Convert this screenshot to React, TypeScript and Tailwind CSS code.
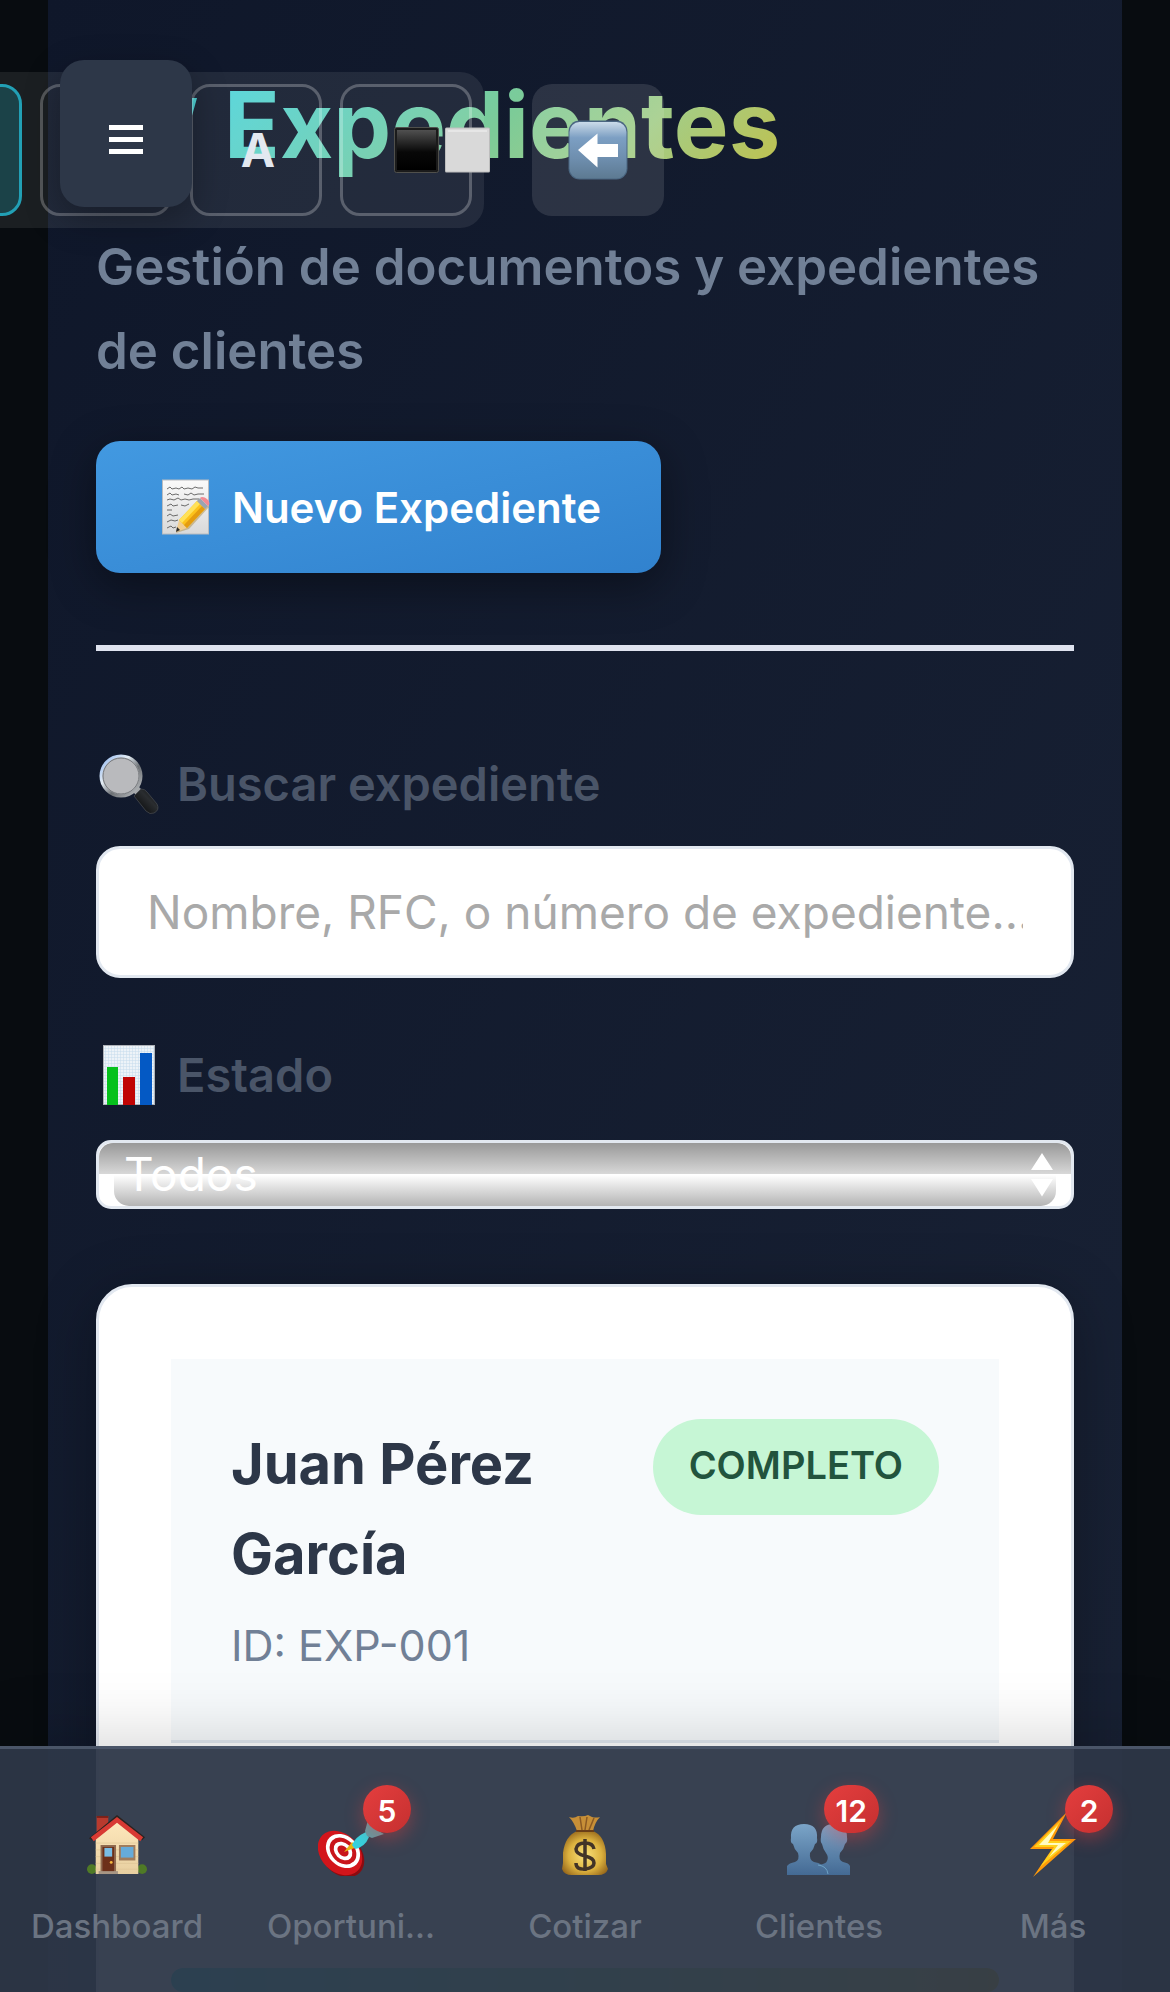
import React from "react";

function FolderIcon() {
  return (
    <svg viewBox="0 0 104 96" className="h-24 w-[104px] shrink-0" aria-hidden="true">
      <path d="M8 22h30l8 10h45l3-11h7L90 60v24H8z" fill="#3fcfd2" />
    </svg>
  );
}

function BackIcon() {
  return (
    <svg viewBox="0 0 60 60" className="size-[60px] shrink-0" aria-hidden="true">
      <defs>
        <linearGradient id="backFace" x1="0" y1="0" x2="0" y2="1">
          <stop offset="0" stopColor="#cbdcea" />
          <stop offset="0.12" stopColor="#a9c1d8" />
          <stop offset="0.28" stopColor="#7c9fc3" />
          <stop offset="0.65" stopColor="#6e8eae" />
          <stop offset="1" stopColor="#5d7a92" />
        </linearGradient>
      </defs>
      <rect x="0.5" y="0.5" width="59" height="59" rx="11" fill="#4a6681" />
      <rect x="1.5" y="2" width="57" height="56.5" rx="10" fill="url(#backFace)" />
      <path d="M10 30 29.500 13.500V24H50v13H29.500v10.500z" fill="#fff" />
    </svg>
  );
}

function SquaresIcon() {
  return (
    <svg viewBox="0 0 96 46" className="h-[46px] w-24 shrink-0" aria-hidden="true">
      <defs>
        <linearGradient id="blackFace" x1="0" y1="0" x2="0" y2="1">
          <stop offset="0" stopColor="#505050" />
          <stop offset="0.55" stopColor="#080808" />
          <stop offset="1" stopColor="#000" />
        </linearGradient>
      </defs>
      <rect x="0.5" y="0.5" width="44" height="45" rx="2" fill="#1b1b1b" stroke="#50504c" />
      <rect x="3" y="3" width="39" height="40" fill="url(#blackFace)" />
      <rect x="51" y="0.500" width="45" height="45" rx="1.500" fill="#bdbdbd" />
      <rect x="52" y="1.500" width="43" height="43" fill="#d9d9d9" />
      <rect x="54" y="3" width="39" height="2" fill="#e6e6e6" />
    </svg>
  );
}

function MemoIcon() {
  return (
    <svg viewBox="0 0 50 56" className="h-14 w-[50px] shrink-0" aria-hidden="true">
      <defs>
        <linearGradient id="paper" x1="0" y1="0" x2="0" y2="1">
          <stop offset="0" stopColor="#fafafa" />
          <stop offset="1" stopColor="#d9d9d9" />
        </linearGradient>
      </defs>
      <rect x="0.500" y="1" width="46" height="54" fill="url(#paper)" stroke="#b9bcc0" />
      <g fill="none" stroke="#5c5c5c" strokeWidth="0.900">
        <path d="M5 10l3-2 2 2 4-1 3 1 3-2 2 2 4-1 4 1 3-2 3 1 5 0" />
        <path d="M5 16l3-2 2 2 4-1 3 1M22 15l4 1 3-2 3 2 4-1 6 0" />
        <path d="M5 21l3-1 4 1 4-2 3 2 4-1 4 1 4-1 6 0" />
        <path d="M5 27l4-2 2 2 5-1M19 26l4 1 4-2" />
        <path d="M5 31h5" />
        <path d="M5 37l3-2 3 2 5-1" />
        <path d="M5 43l4-2 4 1 3-1M5 49l4-2 2 2 3-1" />
      </g>
      <path d="M14 54l4-13 19-21 10 8-20 22z" fill="#9a6a00" opacity="0.350" />
      <path d="M14 53l3-12 8 8z" fill="#f1cd91" />
      <path d="M14 53l1-5 3 3z" fill="#2b2b2b" />
      <path d="M17 41 35 22l8 8-18 19z" fill="#fcc21b" />
      <path d="M17 41 35 22l3 3-18 19z" fill="#ffe158" />
      <path d="M22 46 40 27l3 3-18 19z" fill="#e49c10" />
      <path d="M35 22l3-3 8 8-3 3z" fill="#9aa4b1" />
      <path d="M38 19c3-4 13 4 8 8z" fill="#f28a93" />
    </svg>
  );
}

function SearchIcon() {
  return (
    <svg viewBox="0 0 60 60" className="size-[60px] shrink-0" aria-hidden="true">
      <defs>
        <linearGradient id="rim" x1="0" y1="0" x2="1" y2="1">
          <stop offset="0" stopColor="#8db4ee" />
          <stop offset="0.350" stopColor="#e4edf5" />
          <stop offset="0.600" stopColor="#6c7074" />
          <stop offset="1" stopColor="#c5c8cb" />
        </linearGradient>
        <linearGradient id="handle" x1="0" y1="1" x2="1" y2="0">
          <stop offset="0" stopColor="#000" />
          <stop offset="0.600" stopColor="#2a2d30" />
          <stop offset="1" stopColor="#0b0b0b" />
        </linearGradient>
      </defs>
      <path d="M33 37l6-5 5 5-5 6z" fill="#a3a6a9" />
      <path
        d="M35 42l7-7q4 0 6 3l10 12q3 6-3 9-4 2-8-2z"
        fill="url(#handle)"
        stroke="#44484c"
        strokeWidth="0.800"
      />
      <circle cx="22" cy="22" r="20" fill="#b9babd" stroke="url(#rim)" strokeWidth="3" />
      <circle cx="22" cy="22" r="18" fill="none" stroke="#75787c" strokeWidth="1" />
    </svg>
  );
}

function ChartIcon() {
  return (
    <svg viewBox="0 0 60 60" className="size-[60px] shrink-0" aria-hidden="true">
      <defs>
        <pattern id="chartGrid" width="3" height="3" patternUnits="userSpaceOnUse">
          <rect width="3" height="3" fill="#edf3f8" />
          <path d="M0 0H3M0 0V3" stroke="#c6dced" strokeWidth="1" />
        </pattern>
      </defs>
      <rect x="4.500" y="0.500" width="51" height="59" fill="url(#chartGrid)" stroke="#aeb2b8" />
      <path d="M8 22h11v38H8z" fill="#06c11c" />
      <path d="M24 32h12v28H24z" fill="#c00404" />
      <path d="M41 8h12v52H41z" fill="#0459c4" />
    </svg>
  );
}

function HouseIcon() {
  return (
    <svg viewBox="0 0 62 62" className="size-[62px]" aria-hidden="true">
      <defs>
        <linearGradient id="wall" x1="0" y1="0" x2="0" y2="1">
          <stop offset="0" stopColor="#ffe9bd" />
          <stop offset="1" stopColor="#e8cfa0" />
        </linearGradient>
      </defs>
      <path d="M10 1h12v10L10 21z" fill="#b83a2e" />
      <path d="M10 1h12v2H10z" fill="#7c2119" />
      <circle cx="5" cy="56" r="5" fill="#4f7a26" />
      <circle cx="57" cy="56" r="5" fill="#4f7a26" />
      <path d="M9 23 31 3l22 20v38H9z" fill="url(#wall)" />
      <path d="M9 29h44M9 36h44M9 43h44M9 50h44M9 56h44" stroke="#dfc596" strokeWidth="0.700" />
      <path d="M31 0l29 23-3 3L31 5 5 26l-3-2z" fill="#2b2320" />
      <path d="M31 2l27 21-3 4L31 8 7 27l-3-4z" fill="#d83a33" />
      <path d="M14 31h16v28H14z" fill="#8f6a50" />
      <path d="M16 33h12v26H16z" fill="#6d3019" />
      <path d="M18 34h8v9h-8z" fill="#79bde5" />
      <circle cx="25" cy="49" r="1.500" fill="#f6b73e" />
      <path d="M33 31h17v16H33z" fill="#a07c5c" />
      <path d="M35 33h13v11H35z" fill="#66abd9" />
      <path d="M12 58h20v3H12z" fill="#a89684" />
    </svg>
  );
}

function TargetIcon() {
  return (
    <svg viewBox="0 0 66 62" className="h-[62px] w-[66px] shrink-0" aria-hidden="true">
      <ellipse cx="24" cy="41" rx="19" ry="25" transform="rotate(-45 24 41)" fill="#8c0b10" />
      <ellipse cx="22" cy="39" rx="19" ry="25" transform="rotate(-45 22 39)" fill="#d3151b" />
      <ellipse cx="25" cy="37" rx="15" ry="19" transform="rotate(-45 25 37)" fill="#fff" />
      <ellipse cx="25" cy="37" rx="11.500" ry="15" transform="rotate(-45 25 37)" fill="#c9151b" />
      <ellipse cx="25" cy="37" rx="8" ry="10.500" transform="rotate(-45 25 37)" fill="#fff" />
      <ellipse cx="25" cy="37" rx="4.500" ry="6.500" transform="rotate(-45 25 37)" fill="#c9151b" />
      <path d="M26 38l8-10 5 5z" fill="#e5b414" />
      <path d="M34 31q3-8 14-13l3 5q-4 10-14 12z" fill="#36d1dd" />
      <path d="M47 17 50 6 57 15l9 5-12 4-5-2z" fill="#5c9fa7" />
    </svg>
  );
}

function MoneyIcon() {
  return (
    <svg viewBox="0 0 46 62" className="h-[62px] w-[46px]" aria-hidden="true">
      <defs>
        <radialGradient id="bag" cx="0.500" cy="0.550" r="0.600">
          <stop offset="0" stopColor="#fae17c" />
          <stop offset="0.600" stopColor="#dcb13e" />
          <stop offset="1" stopColor="#95661b" />
        </radialGradient>
      </defs>
      <path d="M7 3q5 2 9-1 6 1 10-1l4 2q4 1 8 0-5 5-7 14H15Q12 8 7 3z" fill="#c78f37" />
      <path d="M18 3l2 13M25 3l-2 13M32 4l-5 12" stroke="#8b5a23" strokeWidth="1.500" />
      <path d="M15 17h16q12 5 13 23v10l2 5q-2 6-10 6H10q-8 0-10-6l1-6V39Q3 22 15 17z" fill="url(#bag)" />
      <path d="M14 17h18" stroke="#6a3e18" strokeWidth="2" />
      <path
        d="M32 35q-1-6-9-6t-9 6q0 5 9 7t9 7-9 6-9-6M23 25v32"
        fill="none"
        stroke="#423327"
        strokeWidth="3.500"
      />
    </svg>
  );
}

function PeopleIcon() {
  return (
    <svg viewBox="0 0 64 62" className="h-[62px] w-16 shrink-0" aria-hidden="true">
      <defs>
        <linearGradient id="bust" x1="0" y1="0" x2="0" y2="1">
          <stop offset="0" stopColor="#7ba5c8" />
          <stop offset="1" stopColor="#446a94" />
        </linearGradient>
      </defs>
      <path
        d="M0 61V52q2-3 8-4 5-2 3-9-4-4-5-9-3-1-2-6Q3 10 17 10t13 14q1 5-2 6-1 5-5 9-1 7 4 9 9 1 13 9v4z"
        fill="url(#bust)"
      />
      <path
        d="M31 51q8-1 9-4 2-4-1-8-3-4-4-9-2-2-1-7 0-13 13-13t13 13q1 5-2 7-1 5-5 9-2 7 3 9 6 1 7 4v9H40q0-6-9-10z"
        fill="url(#bust)"
      />
      <path d="M31 51q9 1 10 9" fill="none" stroke="#6ea3c6" />
    </svg>
  );
}

function BoltIcon() {
  return (
    <svg viewBox="0 0 46 66" className="h-[66px] w-[46px] shrink-0" aria-hidden="true">
      <path d="M37 0 0 37h22L3 65 46 27H23z" fill="#ff9b0a" />
      <path d="M32 7 4 35h20L10 55 41 29H19z" fill="#ffd21c" />
      <path d="M28 13 9 33h19l-9 12 17-14H18z" fill="#fffbc2" />
    </svg>
  );
}

type NavItem = { label: string; icon: React.ReactNode; badge?: string };

const navItems: NavItem[] = [
  { label: "Dashboard", icon: <HouseIcon /> },
  { label: "Oportuni...", icon: <TargetIcon />, badge: "5" },
  { label: "Cotizar", icon: <MoneyIcon /> },
  { label: "Clientes", icon: <PeopleIcon />, badge: "12" },
  { label: "Más", icon: <BoltIcon />, badge: "2" },
];

function FloatingTools() {
  const tool =
    "flex size-[132px] shrink-0 items-center justify-center rounded-[20px] border-[3px] border-white/25";
  return (
    <>
      <div className="absolute top-[72px] -left-[122px] z-10 flex gap-[18px] rounded-3xl bg-white/8 p-3">
        <button
          aria-label="Tema"
          className="size-[132px] shrink-0 rounded-[20px] border-[3px] border-[#22a0b5] bg-[#20d0e0]/20"
        />
        <button aria-label="Contraste" className={tool} />
        <button className={tool + " pl-1 text-[46px] font-bold text-slate-200"}>A</button>
        <button aria-label="Blanco y negro" className={tool}>
          <span className="ml-[72px]">
            <SquaresIcon />
          </span>
        </button>
      </div>
      <button
        aria-label="Volver"
        className="absolute top-[84px] left-[532px] z-10 flex size-[132px] items-center justify-center rounded-[20px] bg-white/11"
      >
        <BackIcon />
      </button>
      <button
        aria-label="Menú"
        className="absolute top-[60px] left-[60px] z-20 flex h-[147px] w-[132px] flex-col items-center justify-center gap-[7px] rounded-3xl bg-[#2d3748] pt-3 shadow-[0_12px_36px_rgba(0,0,0,0.3)]"
      >
        <span className="h-[5px] w-[34px] bg-white" />
        <span className="h-[5px] w-[34px] bg-white" />
        <span className="h-[5px] w-[34px] bg-white" />
      </button>
    </>
  );
}

function StatusSelect() {
  return (
    <div className="relative h-[69px] overflow-hidden rounded-[15px] border-[3px] border-slate-200 bg-white">
      <span className="absolute inset-x-0 top-0 h-[31px] rounded-t-[14px] bg-linear-to-b from-[#999] to-[#d8d8d8]" />
      <span className="absolute inset-x-[15px] bottom-0 h-[31px] rounded-b-[15px] bg-linear-to-b from-white to-[#b4b4b4]" />
      <select
        id="estado"
        className="absolute inset-0 size-full appearance-none bg-transparent pl-[25px] text-[46px] leading-[61px] text-white outline-none"
      >
        <option>Todos</option>
      </select>
      <svg
        viewBox="0 0 22 44"
        className="pointer-events-none absolute top-[10px] right-[18px] h-11 w-[22px]"
        aria-hidden="true"
      >
        <path d="M11 0 22 17H0zM11 43.500 22 26H0z" fill="#fff" />
      </svg>
    </div>
  );
}

function ExpedienteCard() {
  return (
    <article className="mt-[75px] rounded-t-[36px] border-[3px] border-slate-200 bg-white p-[72px] shadow-[0_12px_60px_rgba(0,0,0,0.3)]">
      <header className="flex items-start justify-between border-b-[3px] border-slate-200 bg-[#f7fafc] p-[60px]">
        <div>
          <h2 className="text-[56px] leading-[90px] font-bold text-[#2d3748]">Juan Pérez García</h2>
          <p className="mt-3 text-[43px] leading-[69px] text-[#718096]">ID: EXP-001</p>
        </div>
        <span className="flex h-24 shrink-0 items-center rounded-full bg-[#c6f6d5] px-9 pb-1 text-[38px] font-semibold text-[#22543d]">
          COMPLETO
        </span>
      </header>
      <div className="mt-[225px] h-6 rounded-xl bg-linear-to-r from-[#10e4e8] via-[#70e890] to-[#f0d800]" />
    </article>
  );
}

function BottomNav() {
  return (
    <nav className="absolute inset-x-0 bottom-0 z-10 grid h-[246px] grid-cols-5 border-t-[3px] border-[#4a5568] bg-[#2d3748]/95 shadow-[0_-12px_60px_rgba(0,0,0,0.15)]">
      {navItems.map((item) => (
        <a key={item.label} href="#" className="flex flex-col items-center pt-[66px]">
          <span className="relative flex size-[60px] items-center justify-center">
            {item.icon}
            {item.badge && (
              <span className="absolute -top-[30px] -right-[30px] flex h-12 min-w-12 items-center justify-center rounded-3xl bg-linear-to-br from-[#e53e3e] to-[#c53030] px-3 pt-1 text-[30px] leading-none font-semibold text-white shadow-[0_6px_18px_rgba(229,62,62,0.4)]">
                {item.badge}
              </span>
            )}
          </span>
          <span className="mt-[27px] text-[33px] leading-[48px] font-medium text-[#6b7482]">
            {item.label}
          </span>
        </a>
      ))}
    </nav>
  );
}

export default function App() {
  return (
    <div className="relative h-screen overflow-hidden bg-[#080c10] px-12 font-['Inter',sans-serif]">
      <FloatingTools />
      <main className="min-h-full bg-linear-to-br from-[#0f172a] to-[#192235] px-12 pt-[69px]">
        <header className="border-b-[6px] border-[#dfe3ef] pb-[72px]">
          <h1 className="flex items-center gap-6 bg-[linear-gradient(135deg,#4dd4dc_12%,#7ccb98_42%,#a2cd88_56%,#bcc255_70%)] bg-clip-text text-[92px] leading-[112px] font-bold text-transparent">
            <FolderIcon />
            Expedientes
          </h1>
          <p className="mt-11 mb-12 text-[51px] leading-[84px] font-semibold text-[#718096]">
            Gestión de documentos y expedientes de clientes
          </p>
          <button className="flex h-[132px] items-center gap-5 rounded-3xl bg-linear-to-br from-[#4299e1] to-[#3182ce] pr-[60px] pl-[66px] text-[42px] font-semibold text-white shadow-[0_12px_45px_rgba(0,0,0,0.4)]">
            <MemoIcon />
            Nuevo Expediente
          </button>
        </header>

        <label
          htmlFor="buscar"
          className="mt-[95px] flex items-center gap-[18px] pl-[3px] text-[47px] leading-[76px] font-semibold text-[#4a5568]"
        >
          <SearchIcon />
          Buscar expediente
        </label>
        <input
          id="buscar"
          type="text"
          placeholder="Nombre, RFC, o número de expediente..."
          className="mt-6 block h-[132px] w-full rounded-3xl border-[3px] border-slate-200 bg-white px-12 text-[46px] outline-none placeholder:text-[#a9a9a9]"
        />

        <label
          htmlFor="estado"
          className="mt-[59px] mb-[27px] flex items-center gap-[18px] pl-[3px] text-[47px] leading-[76px] font-semibold text-[#4a5568]"
        >
          <ChartIcon />
          Estado
        </label>
        <StatusSelect />

        <ExpedienteCard />
      </main>
      <BottomNav />
    </div>
  );
}
